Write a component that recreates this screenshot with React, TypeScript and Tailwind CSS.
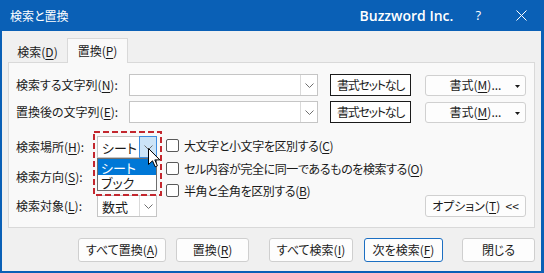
import React from "react";

const FONT =
  "font-['Noto_Sans_CJK_JP','Noto_Sans_CJK_SC',sans-serif] [font-feature-settings:'palt']";

function U({ children }: { children: React.ReactNode }) {
  return <span className="underline decoration-1 underline-offset-[2px]">{children}</span>;
}

function Chevron() {
  return (
    <svg width="9" height="5" viewBox="0 0 9 5">
      <path d="M0.5 0.5 L4.5 4.5 L8.5 0.5" fill="none" stroke="#6f6f6f" strokeWidth="1" />
    </svg>
  );
}

function Combo({ w, text, active }: { w: string; text?: string; active?: boolean }) {
  return (
    <div className={`flex h-[22px] shrink-0 ${w} border border-[#c5c5c5] bg-white`}>
      <div className="flex flex-1 items-center pl-[4px] text-[13px] leading-none text-[#1a1a1a]">{text}</div>
      {active ? (
        <div className="-my-px -mr-px flex h-[22px] w-[18px] items-center justify-center border border-[#3d8ee0] bg-[#cce4f7]">
          <Chevron />
        </div>
      ) : (
        <div className="flex w-[17px] items-center justify-center border-l border-[#dadada]">
          <Chevron />
        </div>
      )}
    </div>
  );
}

function Btn({ cls, children, primary }: { cls: string; children: React.ReactNode; primary?: boolean }) {
  return (
    <div
      className={`flex h-[24px] shrink-0 items-center justify-center whitespace-nowrap rounded-[3px] border bg-[#fdfdfd] text-[12px] leading-none text-[#1a1a1a] ${
        primary ? "border-[#1c6fc2]" : "border-[#cfcfcf]"
      } ${cls}`}
    >
      {children}
    </div>
  );
}

function Check({ children }: { children: React.ReactNode }) {
  return (
    <div className="flex h-[22.5px] items-start">
      <div className="h-[13px] w-[13px] shrink-0 rounded-[2px] border border-[#5a5a5a] bg-white" />
      <div className="ml-[5px] -mt-[1px] whitespace-nowrap text-[12px] leading-[15px] tracking-[-0.4px] text-[#1a1a1a]">
        {children}
      </div>
    </div>
  );
}

function FormatRow({ label }: { label: React.ReactNode }) {
  return (
    <div className="flex h-[22px] items-center">
      <div className="w-[113px] shrink-0 whitespace-nowrap">{label}</div>
      <Combo w="w-[189px]" />
      <div className="ml-[12px] flex h-[22px] w-[81px] shrink-0 items-center justify-center whitespace-nowrap border border-[#1a1a1a] bg-white tracking-[-1.3px]">
        書式セットなし
      </div>
      <div className="relative ml-[14px] flex h-[21px] w-[101px] shrink-0 items-center justify-center whitespace-nowrap rounded-[3px] border border-[#d0d0d0] bg-[#fdfdfd]">
        書式(<U>M</U>)...
        <svg className="absolute right-[5px] top-[9px]" width="5" height="3" viewBox="0 0 5 3">
          <path d="M0 0 L5 0 L2.5 3 Z" fill="#1a1a1a" />
        </svg>
      </div>
    </div>
  );
}

export default function App() {
  return (
    <div className={`relative flex h-[273px] w-[544px] flex-col overflow-hidden bg-[#0a60b6] ${FONT}`}>
      {/* title bar */}
      <div className="flex h-[31px] shrink-0 items-center text-white">
        <div className="ml-[10px] text-[12px] leading-none">検索と置換</div>
        <div className="ml-auto font-['Open_Sans',sans-serif] text-[14px] font-semibold leading-none">
          Buzzword Inc.
        </div>
        <div className="ml-[22px] font-['Open_Sans',sans-serif] text-[13px] leading-none">?</div>
        <svg className="ml-[35px] mr-[17px]" width="11" height="11" viewBox="0 0 11 11">
          <path d="M0.5 0.5 L10.5 10.5 M10.5 0.5 L0.5 10.5" stroke="white" strokeWidth="1" />
        </svg>
      </div>

      {/* body */}
      <div className="mb-[2px] ml-[2px] mr-[3px] flex flex-1 flex-col bg-[#f0f0f0]">
        {/* tabs */}
        <div className="ml-[6px] mt-[7px] flex h-[24px] items-end">
          <div className="flex h-[21px] w-[59px] items-center justify-center text-[12px] leading-none text-[#1a1a1a]">
            検索(<U>D</U>)
          </div>
          <div className="relative z-10 -mb-px flex h-[25px] w-[61px] items-center justify-center border-x border-t border-[#d9d9d9] bg-[#f9f9f9] text-[12px] leading-none text-[#1a1a1a]">
            置換(<U>P</U>)
          </div>
        </div>

        {/* panel */}
        <div className="mx-[6px] flex h-[166px] flex-col border border-[#d9d9d9] bg-[#f9f9f9] pl-[7px] pr-[8px] pt-[11px] text-[12px] leading-none text-[#1a1a1a]">
          <FormatRow
            label={
              <>
                検索する文字列(<U>N</U>):
              </>
            }
          />
          <div className="mt-[5px]">
            <FormatRow
              label={
                <>
                  置換後の文字列(<U>E</U>):
                </>
              }
            />
          </div>

          <div className="mt-[13px] flex">
            <div className="flex shrink-0 flex-col gap-[7.5px]">
              <div className="flex h-[22px] items-center">
                <div className="w-[81px] whitespace-nowrap">
                  検索場所(<U>H</U>):
                </div>
                <div className="relative">
                  <Combo w="w-[60px]" text="シート" active />
                  {/* open list */}
                  <div className="absolute left-0 top-[22px] z-20 flex h-[33px] w-[60px] flex-col border border-[#6e6e6e] bg-white text-[13px] leading-none">
                    <div className="flex h-[16px] items-center bg-[#0078d7] pl-[3px] text-white">シート</div>
                    <div className="flex h-[15px] items-center pl-[3px] text-[#1a1a1a]">ブック</div>
                  </div>
                  {/* annotation */}
                  <svg className="absolute left-[-4px] top-[-5px] z-30" width="69" height="65" viewBox="0 0 69 65">
                    <rect x="1" y="1" width="67" height="63" fill="none" stroke="#c3272e" strokeWidth="2" strokeDasharray="6 3" />
                  </svg>
                  {/* cursor */}
                  <svg className="absolute left-[51px] top-[12px] z-40" width="13" height="20" viewBox="0 0 13 20">
                    <path
                      d="M0.5 0.5 L0.5 16.5 L4.5 12.8 L7.2 18.8 L9.4 17.8 L6.8 11.9 L11.8 11.9 Z"
                      fill="white"
                      stroke="black"
                      strokeWidth="1"
                      strokeLinejoin="round"
                    />
                  </svg>
                </div>
              </div>
              <div className="flex h-[22px] items-center">
                <div className="w-[81px] whitespace-nowrap">
                  検索方向(<U>S</U>):
                </div>
                <Combo w="w-[60px]" />
              </div>
              <div className="flex h-[22px] items-center">
                <div className="w-[81px] whitespace-nowrap">
                  検索対象(<U>L</U>):
                </div>
                <Combo w="w-[60px]" text="数式" />
              </div>
            </div>

            <div className="ml-[9px] flex shrink-0 flex-col pt-[3px]">
              <Check>
                大文字と小文字を区別する(<U>C</U>)
              </Check>
              <Check>
                セル内容が完全に同一であるものを検索する(<U>O</U>)
              </Check>
              <Check>
                半角と全角を区別する(<U>B</U>)
              </Check>
            </div>

            <div className="flex flex-1 items-end justify-end">
              <div className="flex h-[22px] w-[101px] shrink-0 items-center justify-center whitespace-nowrap rounded-[3px] border border-[#d0d0d0] bg-[#fdfdfd]">
                オプション(<U>T</U>)&nbsp;&nbsp;&lt;&lt;
              </div>
            </div>
          </div>
        </div>

        {/* footer */}
        <div className="mt-[10px] flex">
          <Btn cls="ml-[76px] w-[88px]">
            すべて置換(<U>A</U>)
          </Btn>
          <Btn cls="ml-[10px] w-[73px]">
            置換(<U>R</U>)
          </Btn>
          <Btn cls="ml-[20px] w-[84px]">
            すべて検索(<U>I</U>)
          </Btn>
          <Btn cls="ml-[11px] w-[79px]" primary>
            次を検索(<U>F</U>)
          </Btn>
          <Btn cls="ml-[19px] w-[73px]">閉じる</Btn>
        </div>
      </div>
    </div>
  );
}
